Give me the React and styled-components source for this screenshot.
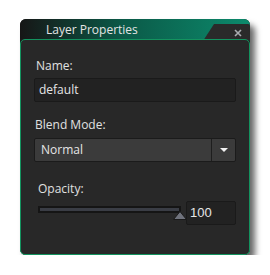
import React from "react";
import styled, { createGlobalStyle } from "styled-components";

const Global = createGlobalStyle`
  body {
    margin: 0;
    background: #ffffff;
    font-family: "Open Sans", "Noto Sans", sans-serif;
  }
`;

const Page = styled.div`
  padding: 19px 0 0 20px;
`;

const Window = styled.div`
  width: 230px;
  height: 236px;
  display: flex;
  flex-direction: column;
  border-radius: 6px;
  background: #1c1c1c;
  box-shadow: 5px 6px 6px rgba(0, 0, 0, 0.6);
`;

const TitleBar = styled.div`
  position: relative;
  height: 20px;
  flex: none;
  border-radius: 6px 6px 0 0;
  background: linear-gradient(90deg, #161616 0%, #0b5a48 45%, #0c8a6c 100%);
  display: flex;
  align-items: center;
`;

const Title = styled.span`
  padding-left: 26px;
  font-size: 12px;
  color: #e4e4e4;
`;

const CloseTab = styled.div`
  position: absolute;
  right: 0;
  top: 5px;
  bottom: -2px;
  width: 47px;
  background: #2a2a2a;
  border-top-right-radius: 2px;
  clip-path: polygon(11px 0, 100% 0, 100% 100%, 0 100%);
  display: flex;
  align-items: center;
  justify-content: flex-end;
  padding-right: 8px;
  box-sizing: border-box;
`;

const Panel = styled.div`
  position: relative;
  z-index: 1;
  flex: 1;
  background: #282828;
  border: 1px solid #13935f;
  border-radius: 5px;
  padding: 18px 13px 0 13px;
  display: flex;
  flex-direction: column;
`;

const Label = styled.div`
  font-size: 12px;
  line-height: 16px;
  color: #e0e0e0;
  padding-left: ${(p) => p.$indent || 2}px;
  margin-top: ${(p) => p.$top || 0}px;
  margin-bottom: ${(p) => p.$bottom || 4}px;
`;

const TextInput = styled.div`
  height: 24px;
  box-sizing: border-box;
  background: #222222;
  border: 1px solid #1a1a1a;
  border-radius: 2px;
  font-size: 12px;
  line-height: 22px;
  color: #e6e6e6;
  padding-left: 4px;
`;

const Select = styled.div`
  height: 24px;
  box-sizing: border-box;
  display: flex;
  background: #3b3b3b;
  border: 1px solid #1b1b1b;
  border-radius: 2px;
`;

const SelectValue = styled.div`
  flex: 1;
  font-size: 12px;
  line-height: 22px;
  color: #e6e6e6;
  padding-left: 6px;
`;

const SelectArrow = styled.div`
  width: 23px;
  border-left: 1px solid #1e1e1e;
  display: flex;
  align-items: center;
  justify-content: center;
`;

const SliderRow = styled.div`
  display: flex;
  align-items: center;
  gap: 4px;
`;

const Slider = styled.div`
  position: relative;
  flex: 1;
  margin-left: 4px;
  height: 24px;
`;

const Track = styled.div`
  position: absolute;
  left: 0;
  right: 1px;
  top: 5px;
  height: 7px;
  box-sizing: border-box;
  background: #3a3d45;
  border: 2px solid #151515;
`;

const Thumb = styled.svg`
  position: absolute;
  right: -5px;
  top: 10px;
`;

const NumberBox = styled.div`
  width: 50px;
  height: 24px;
  box-sizing: border-box;
  background: #222222;
  border: 1px solid #1a1a1a;
  border-radius: 2px;
  font-family: "Liberation Sans", Arial, sans-serif;
  font-size: 13px;
  line-height: 22px;
  color: #e6e6e6;
  padding-left: 3px;
`;

export default function App() {
  return (
    <Page>
      <Global />
      <Window>
        <TitleBar>
          <Title>Layer Properties</Title>
          <CloseTab>
            <svg width="8" height="8" viewBox="0 0 8 8">
              <path d="M1 1L7 7M7 1L1 7" stroke="#a9acb0" strokeWidth="1.6" />
            </svg>
          </CloseTab>
        </TitleBar>
        <Panel>
          <Label>Name:</Label>
          <TextInput>default</TextInput>
          <Label $top={15} $bottom={5} $indent={1}>Blend Mode:</Label>
          <Select>
            <SelectValue>Normal</SelectValue>
            <SelectArrow>
              <svg width="8" height="4" viewBox="0 0 8 4">
                <path d="M0 0H8L4 4Z" fill="#f2f2f2" />
              </svg>
            </SelectArrow>
          </Select>
          <Label $top={19} $bottom={4} $indent={4}>Opacity:</Label>
          <SliderRow>
            <Slider>
              <Track />
              <Thumb width="14" height="9" viewBox="0 0 14 9">
                <path d="M7 0.5L13.5 8.5H0.5Z" fill="#6f727c" stroke="#1a1a1a" strokeWidth="1" />
              </Thumb>
            </Slider>
            <NumberBox>100</NumberBox>
          </SliderRow>
        </Panel>
      </Window>
    </Page>
  );
}
